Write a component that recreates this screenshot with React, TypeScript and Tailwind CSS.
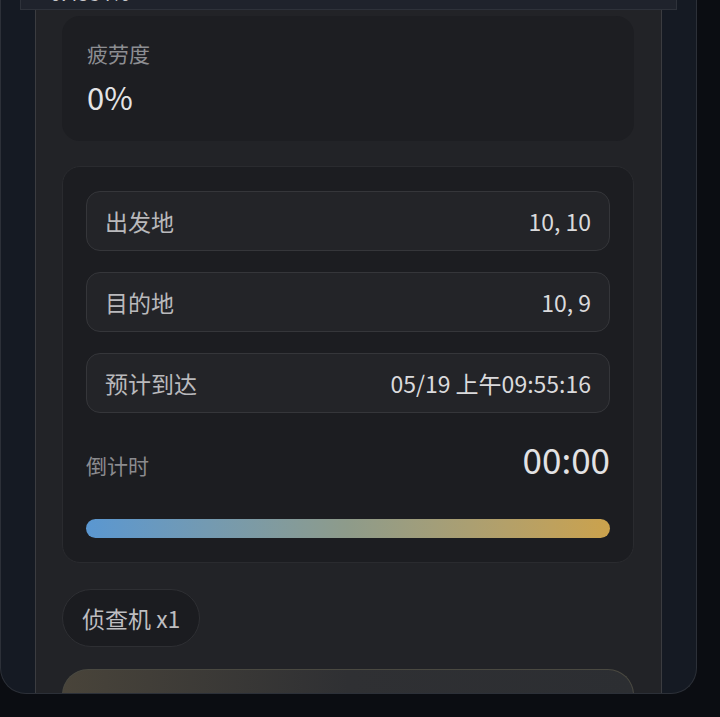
import React from 'react';

const font = { fontFamily: '"Noto Sans CJK SC", "Noto Sans", sans-serif' };

interface RowProps {
    label: string;
    value: string;
}

const InfoRow: React.FC<RowProps> = ({ label, value }) => (
    <div className="flex h-[60px] items-center justify-between rounded-[14px] border border-[#35363a] bg-[#232428] px-[18px]">
        <span className="text-[23px] text-[#b9b9bc]">{label}</span>
        <span className="text-[23px] text-[#dadadc]">{value}</span>
    </div>
);

const App: React.FC = () => {
    const rows: RowProps[] = [
        { label: '出发地', value: '10, 10' },
        { label: '目的地', value: '10, 9' },
        { label: '预计到达', value: '05/19 上午09:55:16' },
    ];

    return (
        <div className="h-[717px] w-[720px] overflow-hidden bg-[#0b0d12]" style={font}>
            <div className="flex h-[694px] w-[697px] flex-col rounded-b-[26px] border border-t-0 border-[#2c3038] bg-[#151a23] px-[19px]">
                {/* top strip, scrolled mostly out of view */}
                <div className="h-[10px] overflow-hidden border-x border-b border-[#2e323a] bg-[#1f232c]">
                    <div className="-mt-[19px] pl-[29px] text-[20px] leading-[24px] text-[#c8c8cc]">0.4584%</div>
                </div>

                <div className="mx-[15px] flex min-h-0 flex-1 flex-col overflow-hidden border-x border-[#3b3c40] bg-[#222327] pl-[26px] pr-[27px] pt-[6px]">
                    {/* fatigue */}
                    <div className="flex h-[125px] shrink-0 flex-col rounded-[18px] bg-[#1d1e22] px-[25px] pt-[23px]">
                        <span className="text-[21px] leading-[28px] text-[#8d8e92]">疲劳度</span>
                        <span className="mt-[10px] text-[31px] leading-[40px] text-[#e4e4e6]">0%</span>
                    </div>

                    {/* route */}
                    <div className="mt-[25px] flex shrink-0 flex-col rounded-[18px] border border-[#2a2b2f] bg-[#1c1d21] px-[23px] py-[24px]">
                        <div className="flex flex-col gap-[21px]">
                            {rows.map((r) => (
                                <InfoRow key={r.label} label={r.label} value={r.value} />
                            ))}
                        </div>
                        <div className="mt-[25px] flex items-end justify-between">
                            <span className="text-[21px] leading-[30px] text-[#8b8b8f]">倒计时</span>
                            <span className="text-[35px] leading-[42px] text-[#e2e2e4]">00:00</span>
                        </div>
                        <div className="mt-[39px] h-[19px] rounded-full bg-gradient-to-r from-[#5a97d1] via-[#8e9b8a] to-[#cba24c]" />
                    </div>

                    {/* units */}
                    <div className="mt-[26px] flex shrink-0">
                        <div className="flex h-[58px] items-center rounded-full border border-[#2e2f33] bg-[#1b1c20] px-[19px]">
                            <span className="text-[23px] text-[#bebec1]">侦查机 x1</span>
                        </div>
                    </div>

                    {/* next card, cut off */}
                    <div className="mt-[22px] h-[60px] shrink-0 rounded-t-[26px] border border-b-0 border-[#4a4941] bg-gradient-to-r from-[#49443a] via-[#2f3033] to-[#2c2e32]" />
                </div>
            </div>
        </div>
    );
};

export default App;
